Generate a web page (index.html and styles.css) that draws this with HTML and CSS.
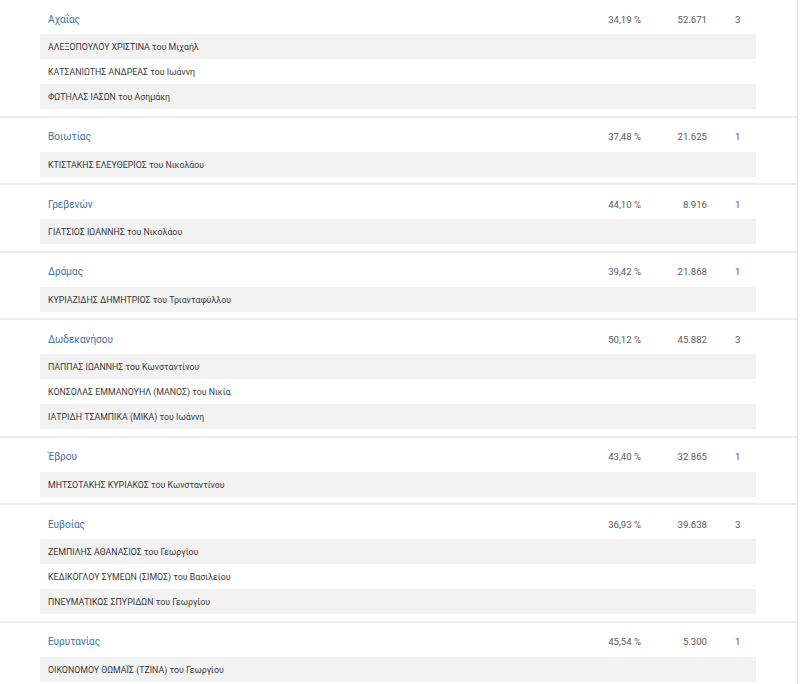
FILE: index.html
```html
<!DOCTYPE html>
<html lang="el">
<head>
<meta charset="utf-8">
<title>Αποτελέσματα</title>
<link rel="stylesheet" href="styles.css">
</head>
<body>
<div class="list">
  <div class="section">
    <div class="head"><span class="region">Αχαΐας</span><span class="pct">34,19 %</span><span class="votes">52.671</span><span class="seats">3</span></div>
    <div class="row">ΑΛΕΞΟΠΟΥΛΟΥ ΧΡΙΣΤΙΝΑ του Μιχαήλ</div>
    <div class="row">ΚΑΤΣΑΝΙΩΤΗΣ ΑΝΔΡΕΑΣ του Ιωάννη</div>
    <div class="row">ΦΩΤΗΛΑΣ ΙΑΣΩΝ του Ασημάκη</div>
  </div>
  <div class="section">
    <div class="head"><span class="region">Βοιωτίας</span><span class="pct">37,48 %</span><span class="votes">21.625</span><span class="seats">1</span></div>
    <div class="row">ΚΤΙΣΤΑΚΗΣ ΕΛΕΥΘΕΡΙΟΣ του Νικολάου</div>
  </div>
  <div class="section">
    <div class="head"><span class="region">Γρεβενών</span><span class="pct">44,10 %</span><span class="votes">8.916</span><span class="seats">1</span></div>
    <div class="row">ΓΙΑΤΣΙΟΣ ΙΩΑΝΝΗΣ του Νικολάου</div>
  </div>
  <div class="section">
    <div class="head"><span class="region">Δράμας</span><span class="pct">39,42 %</span><span class="votes">21.868</span><span class="seats">1</span></div>
    <div class="row">ΚΥΡΙΑΖΙΔΗΣ ΔΗΜΗΤΡΙΟΣ του Τριανταφύλλου</div>
  </div>
  <div class="section">
    <div class="head"><span class="region">Δωδεκανήσου</span><span class="pct">50,12 %</span><span class="votes">45.882</span><span class="seats">3</span></div>
    <div class="row">ΠΑΠΠΑΣ ΙΩΑΝΝΗΣ του Κωνσταντίνου</div>
    <div class="row">ΚΟΝΣΟΛΑΣ ΕΜΜΑΝΟΥΗΛ (ΜΑΝΟΣ) του Νικία</div>
    <div class="row">ΙΑΤΡΙΔΗ ΤΣΑΜΠΙΚΑ (ΜΙΚΑ) του Ιωάννη</div>
  </div>
  <div class="section">
    <div class="head"><span class="region">Έβρου</span><span class="pct">43,40 %</span><span class="votes">32.865</span><span class="seats">1</span></div>
    <div class="row">ΜΗΤΣΟΤΑΚΗΣ ΚΥΡΙΑΚΟΣ του Κωνσταντίνου</div>
  </div>
  <div class="section">
    <div class="head"><span class="region">Ευβοίας</span><span class="pct">36,93 %</span><span class="votes">39.638</span><span class="seats">3</span></div>
    <div class="row">ΖΕΜΠΙΛΗΣ ΑΘΑΝΑΣΙΟΣ του Γεωργίου</div>
    <div class="row">ΚΕΔΙΚΟΓΛΟΥ ΣΥΜΕΩΝ (ΣΙΜΟΣ) του Βασιλείου</div>
    <div class="row">ΠΝΕΥΜΑΤΙΚΟΣ ΣΠΥΡΙΔΩΝ του Γεωργίου</div>
  </div>
  <div class="section">
    <div class="head"><span class="region">Ευρυτανίας</span><span class="pct">45,54 %</span><span class="votes">5.300</span><span class="seats">1</span></div>
    <div class="row">ΟΙΚΟΝΟΜΟΥ ΘΩΜΑΪΣ (ΤΖΙΝΑ) του Γεωργίου</div>
  </div>
</div>
</body>
</html>
```
FILE: styles.css
```css
html, body {
  margin: 0;
  padding: 0;
  background: #ffffff;
  overflow: hidden;
}
body {
  font-family: Roboto, "Noto Sans", sans-serif;
  font-size: 8.8px;
  color: #3a3a3a;
}
.list {
  width: 797px;
  border-right: 1px solid #e2e2e2;
  margin-top: -2px;
}
.section {
  border-top: 2px solid #ececec;
  padding: 0 41px 6.5px 40px;
}
.head {
  display: flex;
  align-items: center;
  height: 34px;
  padding-left: 8px;
  color: #5a5a5a;
  font-size: 9.6px;
}
.region {
  flex: 1;
  color: #3f6fa6;
  font-size: 10px;
  padding-top: 4px;
}
.pct,
.votes,
.seats {
  padding-top: 4px;
}
.pct {
  width: 60px;
  text-align: right;
}
.votes {
  width: 66px;
  text-align: right;
}
.seats {
  width: 49px;
  box-sizing: border-box;
  padding-left: 28px;
}
.row {
  height: 25px;
  line-height: 26px;
  padding-left: 8px;
}
.row:nth-child(even) {
  background: #f2f2f3;
}
```
